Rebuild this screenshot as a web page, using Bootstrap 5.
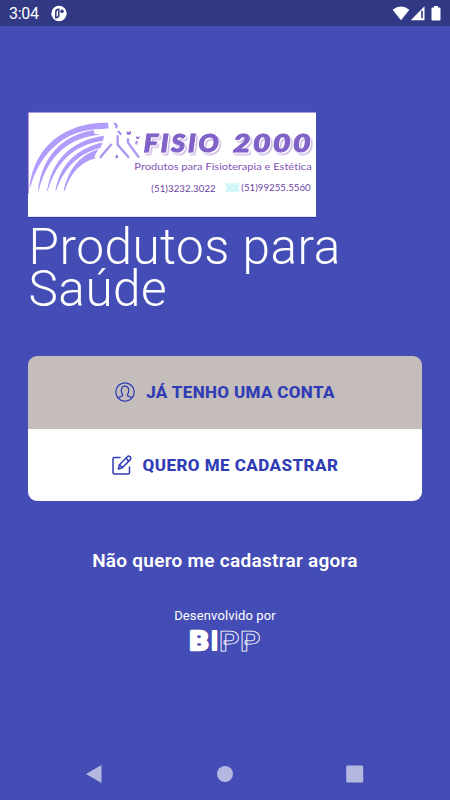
<!DOCTYPE html>
<html lang="pt-BR">
<head>
<meta charset="utf-8">
<meta name="viewport" content="width=device-width, initial-scale=1">
<title>Fisio 2000</title>
<link href="https://cdn.jsdelivr.net/npm/bootstrap@5.3.0/dist/css/bootstrap.min.css" rel="stylesheet">
<style>
body{background:#444db5;font-family:Roboto,"Liberation Sans",sans-serif;height:800px;overflow:hidden}
svg{display:block;flex:none;overflow:visible}
.status{height:26px;background:#313985;font-size:16px;padding:1px 8px 0 9px}
.status-time{letter-spacing:-.3px}
.content{padding:86px 28px 0}
.headline{font-size:49.5px;font-weight:300;line-height:41.5px;margin:10px 0 0 .5px;letter-spacing:.5px}
.headline span{display:block;white-space:nowrap}
.actions{margin-top:46px;height:145px;border-radius:9px;overflow:hidden}
.action{border:0;height:72.5px;font-size:17px;font-weight:800;color:#303cb4;background:#fff;line-height:20px;gap:11px;letter-spacing:.34px}
.action.login{background:#c4bdbc}
.action.signup{letter-spacing:.45px}
.skip{margin-top:47px;font-size:19px;font-weight:600;line-height:26px;text-align:center;letter-spacing:.27px}
.credit{margin-top:33px;font-size:13px;line-height:18px;letter-spacing:.13px}
.wordmark{letter-spacing:0;filter:drop-shadow(4px 5px 0 #fff) drop-shadow(2px 2px 0 #a583d4)}
.tagline{font-variant-ligatures:none}
.navkeys{height:52px;padding:0 86px}
</style>
<script src="https://cdn.jsdelivr.net/npm/bootstrap@5.3.0/dist/js/bootstrap.bundle.min.js"></script>
</head>
<body class="d-flex flex-column text-white">
<header class="status d-flex align-items-center">
  <span class="status-time">3:04</span>
  <svg class="ms-2 me-auto" width="24" height="18" viewBox="0 0 24 18"><circle cx="12" cy="8.5" r="7.7" fill="#fff"/><path d="M8.800 12.700V7q0-2.700 3-2.700v6q0 2.400-3 2.400z" fill="none" stroke="#313985" stroke-width="1.500"/><circle cx="15" cy="6.300" r="1.800" fill="#313985"/></svg>
  <svg width="50" height="18" viewBox="0 0 50 18" fill="#fff"><path d="M.6 4.700Q9 -1.700 17.400 4.700L9 15.200z"/><path d="M32.500 1.300v13.900H18.700z"/><path d="M29.200 5.800h1.600v7.400h-1.600z" fill="#313985"/><path d="M42 1h4v1.500h1.500q1 0 1 1v10.900q0 1-1 1h-7q-1 0-1-1V3.500q0-1 1-1H42z"/></svg>
</header>
<main class="content flex-grow-1">
  <svg width="288" height="105" viewBox="24 21 864 315">
    <path fill="#fff" d="M24 21h864v315H24z"/>
    <path d="M24 22h864M25 21v245" stroke="#8d68cc" stroke-width="2.500"/>
    <g fill="#b19bfb">
      <path d="M28 248C43 117 142 51 264 53l2 17-18 2C150 69 65 131 33 240z"/>
      <path d="M54 258C65 156 125 91 221 75l3 12 20 2C150 94 82 151 56 258z"/>
      <path d="M81 258C95 169 151 106 252 92l-3 15C163 119 109 169 83 258z"/>
      <path d="M106 258C119 185 161 134 248 112l-7 17C174 145 132 190 108 258z"/>
      <path d="M131 258C142 201 176 151 235 133l-12 22 4 5C180 171 151 206 134 258z"/>
    </g>
    <g fill="none" stroke="#ac94ef" stroke-width="7" stroke-linejoin="round">
      <path d="M282 55q10 3 7 15"/>
      <path d="M275 117l-35 41M294 78l10 11M293 91v28l34 39M324 100v13l33 45M351 108l-3 10"/>
    </g>
    <path d="M320 78q4 6 13 0v8q-8 7-13 0zM348 93q3 6 12 0l-3 8q-6 3-9-2zM284 158l7-10 5 10z" fill="#9675d6"/>
    <g class="wordmark" font-family="Lato,sans-serif" font-weight="900" font-style="italic" font-size="74" fill="#8162c8" stroke="#8162c8" stroke-width="3"><text x="371" y="140" textLength="234" font-stretch="normal" letter-spacing="8" lengthAdjust="spacingAndGlyphs">FISIO</text><text x="639" y="140" textLength="240" letter-spacing="6" lengthAdjust="spacingAndGlyphs">2000</text></g>
    <g font-family="Lato,sans-serif" fill="#8055b8">
      <text class="tagline" x="343" y="194" font-size="31" textLength="532" lengthAdjust="spacingAndGlyphs">Produtos para Fisioterapia e Estética</text>
      <g font-size="29" fill="#693fa6"><text x="394" y="260" textLength="193">(51)3232.3022</text><text x="664" y="258" textLength="208">(51)99255.5560</text></g>
    </g>
    <path d="M618 234h40v27h-40z" fill="#d8fafc"/><path d="M619 235l12 14-12 11M657 235l-12 14 12 11M629 248q0-7 9-7t9 7M632 254h13" fill="none" stroke="#b5e3eb" stroke-width="2"/>
    <path d="M24 337h864" stroke="#2222a5" stroke-width="2"/>
  </svg>
  <h1 class="headline"><span>Produtos para</span><span>Saúde</span></h1>
  <div class="actions d-flex flex-column">
    <button class="action login d-flex align-items-center justify-content-center w-100">
      <svg width="20" height="20" viewBox="0 0 20 20" fill="none" stroke="#303cb4" stroke-width="1.25"><circle cx="10" cy="10" r="9.200"/><path d="M3.200 16c1-1.500 4.300-1.300 4.500-2.700.1-1.100-1.500-1.500-1.400-5C6.400 5.400 7.500 4 10 4s3.600 1.400 3.700 4.300c.1 3.500-1.500 3.900-1.400 5 .2 1.400 3.500 1.200 4.500 2.700"/></svg>
      <span>JÁ TENHO UMA CONTA</span>
    </button>
    <button class="action signup d-flex align-items-center justify-content-center w-100">
      <svg width="20" height="20" viewBox="0 0 20 20" fill="none" stroke="#303cb4" stroke-width="1.500" stroke-linejoin="round" stroke-linecap="round"><path d="M8 2.500H2.500Q1 2.500 1 4v13.500Q1 19 2.500 19H16q1.500 0 1.500-1.500V12M6.400 14l1-4.300 8-8q1.200-1.200 2.500-.1l.5.500q1.100 1.300-.1 2.500l-8 8.100zM14 3.300l2.800 2.800M7.600 9.700l2.700 2.800"/></svg>
      <span>QUERO ME CADASTRAR</span>
    </button>
  </div>
  <div class="skip">Não quero me cadastrar agora</div>
  <footer class="credit d-flex flex-column align-items-center">
    <span>Desenvolvido por</span>
    <svg width="74" height="30" viewBox="0 0 74 30" font-family="Roboto,sans-serif" font-size="26" letter-spacing="0" stroke-linejoin="round">
      <g fill="#fff" stroke="#fff" stroke-width="2.600" font-weight="700"><text x="1.500" y="24.500" textLength="19" lengthAdjust="spacingAndGlyphs">B</text><text x="23" y="24.500" stroke-width="2" textLength="7" lengthAdjust="spacingAndGlyphs">I</text></g>
      <g fill="none" stroke="#fff" stroke-width=".75" font-weight="700"><text x="31" y="25.500" font-size="28" textLength="20.500" lengthAdjust="spacingAndGlyphs">P</text><text x="52" y="25.500" font-size="28" textLength="20.500" lengthAdjust="spacingAndGlyphs">P</text></g>
    </svg>
  </footer>
</main>
<nav class="navkeys d-flex align-items-center justify-content-between">
  <svg width="17" height="20" viewBox="0 0 17 20"><path d="M0 10L15.500 1v18z" fill="#b4b8e1"/></svg>
  <svg width="17" height="18" viewBox="0 0 17 18"><circle cx="9" cy="9" r="8" fill="#b4b8e1"/></svg>
  <svg width="18" height="18" viewBox="0 0 18 18"><rect x=".2" y=".5" width="17" height="17" rx="1.500" fill="#b4b8e1"/></svg>
</nav>
</body>
</html>
